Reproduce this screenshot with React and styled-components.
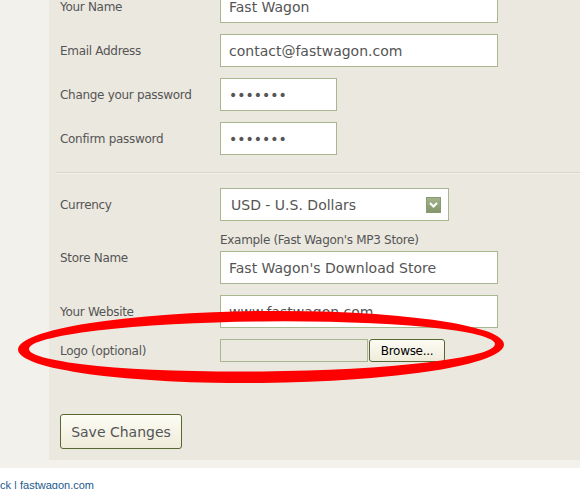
import styled, { createGlobalStyle } from 'styled-components';

const GlobalStyle = createGlobalStyle`
  body {
    margin: 0;
    background: #fff;
    font-family: "DejaVu Sans", Verdana, sans-serif;
    overflow: hidden;
  }
`;

const Page = styled.div`
  position: relative;
  margin-top: -10px;
  background: #f3f1ec;
  padding: 0 0 8px 49px;
`;

const Panel = styled.div`
  background: #ebe8e0;
  padding: 0 0 11px 11px;
`;

const Fieldset = styled.div`
  display: grid;
  grid-template-columns: 160px 1fr;
  row-gap: ${(p) => p.$gap || 11}px;
  align-items: center;
`;

const Label = styled.label`
  font-size: 12px;
  letter-spacing: -0.3px;
  color: #555;
`;

const TextInput = styled.input`
  box-sizing: border-box;
  display: block;
  width: ${(p) => p.$w || 278}px;
  height: 33px;
  margin: 0;
  border: 1px solid #a9b791;
  background: #fff;
  padding: 0 0 0 8px;
  font: 14px "DejaVu Sans", Verdana, sans-serif;
  color: #555;
  outline: none;
`;

const Divider = styled.div`
  margin: 17px 0 14px -4px;
  border-top: 1px solid #d8d5cb;
  border-bottom: 1px solid #f3f1eb;
`;

const SelectBox = styled.div`
  box-sizing: border-box;
  width: 229px;
  height: 33px;
  border: 1px solid #a9b791;
  background: #fff;
  display: flex;
  align-items: center;
  justify-content: space-between;
  padding: 0 7px 0 10px;
  font-size: 14px;
  color: #555;
`;

const DropButton = styled.span`
  box-sizing: border-box;
  width: 15px;
  height: 16px;
  border: 1px solid #8a9a70;
  background: linear-gradient(#a3b28b, #85966b);
  display: flex;
  align-items: center;
  justify-content: center;
`;

const FieldStack = styled.div`
  display: flex;
  flex-direction: column;
  gap: 3px;
`;

const Hint = styled.div`
  font-size: 12px;
  letter-spacing: -0.3px;
  line-height: 16px;
  color: #555;
`;

const FileRow = styled.div`
  display: flex;
  gap: 1px;
`;

const FileText = styled.div`
  box-sizing: border-box;
  width: 148px;
  height: 23px;
  border: 1px solid #a9b791;
  background: #ebe8df;
`;

const OliveButton = styled.button`
  box-sizing: border-box;
  height: ${(p) => p.$h}px;
  width: ${(p) => p.$w}px;
  margin: 0;
  padding: 0;
  border: 1px solid #56672f;
  border-radius: 3px;
  background: linear-gradient(#fdfcf4, #efecdb);
  font-family: "DejaVu Sans", Verdana, sans-serif;
  font-size: ${(p) => p.$size}px;
  letter-spacing: ${(p) => p.$track || 0}px;
  color: ${(p) => p.$color};
  cursor: pointer;
`;

const Actions = styled.div`
  margin-top: 52px;
`;

const Footer = styled.div`
  padding: 11px 0 0;
  font-family: "Liberation Sans", Arial, sans-serif;
  font-size: 11px;
  color: #1b5a8c;
`;

const FooterLink = styled.a`
  color: #1b5a8c;
  text-decoration: none;
`;

const Scribble = styled.svg`
  position: absolute;
  left: 0;
  top: 0;
  pointer-events: none;
`;

function Row({ label, children }) {
  return (
    <>
      <Label>{label}</Label>
      <div>{children}</div>
    </>
  );
}

export default function App() {
  return (
    <>
      <GlobalStyle />
      <Page>
        <Panel>
          <Fieldset>
            <Row label='Your Name'>
              <TextInput readOnly value='Fast Wagon' />
            </Row>
            <Row label='Email Address'>
              <TextInput readOnly value='contact@fastwagon.com' />
            </Row>
            <Row label='Change your password'>
              <TextInput $w={117} type='password' readOnly value='1234567' />
            </Row>
            <Row label='Confirm password'>
              <TextInput $w={117} type='password' readOnly value='1234567' />
            </Row>
          </Fieldset>

          <Divider />

          <Fieldset>
            <Row label='Currency'>
              <SelectBox>
                <span>USD - U.S. Dollars</span>
                <DropButton>
                  <svg width='11' height='8' viewBox='0 0 11 8'>
                    <polyline points='2,2 5.5,5.5 9,2' fill='none' stroke='#fff' strokeWidth='2' />
                  </svg>
                </DropButton>
              </SelectBox>
            </Row>
            <Row label='Store Name'>
              <FieldStack>
                <Hint>Example (Fast Wagon's MP3 Store)</Hint>
                <TextInput readOnly value="Fast Wagon's Download Store" />
              </FieldStack>
            </Row>
            <Row label='Your Website'>
              <TextInput readOnly value='www.fastwagon.com' />
            </Row>
            <Row label='Logo (optional)'>
              <FileRow>
                <FileText />
                <OliveButton $w={76} $h={23} $size={12} $track={-0.3} $color='#000'>
                  Browse...
                </OliveButton>
              </FileRow>
            </Row>
          </Fieldset>

          <Actions>
            <OliveButton $w={122} $h={35} $size={14} $color='#555'>
              Save Changes
            </OliveButton>
          </Actions>
        </Panel>

        <Scribble width='580' height='480' viewBox='0 0 580 480'>
          <path
            fill='#ff0000'
            fillRule='evenodd'
            transform='rotate(-0.6 261 357)'
            d='M 18 357 A 243 36 0 1 0 504 357 A 243 36 0 1 0 18 357 Z M 29 356.5 A 233 25 0 1 0 495 356.5 A 233 25 0 1 0 29 356.5 Z'
          />
        </Scribble>
      </Page>

      <Footer>
        <FooterLink href='#'>ck</FooterLink> | <FooterLink href='#'>fastwagon.com</FooterLink>
      </Footer>
    </>
  );
}
